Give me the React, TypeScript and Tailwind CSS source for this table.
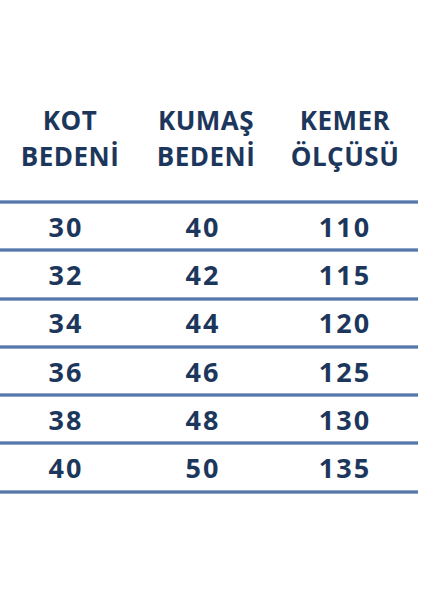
const ROWS: [string, string, string][] = [
  ['30', '40', '110'],
  ['32', '42', '115'],
  ['34', '44', '120'],
  ['36', '46', '125'],
  ['38', '48', '130'],
  ['40', '50', '135'],
]

function Rule() {
  return <div className="h-[4px] w-[418px] bg-[#5577aa] border-y border-[#8ea6c8]" />
}

export default function App() {
  return (
    <div className="h-[600px] w-[424px] bg-white pt-[102px] font-['Open_Sans',sans-serif] font-bold text-[#1d375c]">
      <div className="grid grid-cols-[140px_132px_146px] w-[418px] text-[26px] leading-[36px] text-center tracking-[0.5px]">
        <div>KOT<br />BEDENİ</div>
        <div>KUMAŞ<br />BEDENİ</div>
        <div>KEMER<br />ÖLÇÜSÜ</div>
      </div>
      <div className="mt-[26px]">
        <Rule />
        {ROWS.map(r => (
          <div key={r[0]}>
            <div className="grid grid-cols-[140px_132px_146px] w-[418px] h-[44.3px] items-center text-center text-[27px] leading-none tracking-[2px]">
              <span className="pr-[8px]">{r[0]}</span>
              <span className="pr-[6px]">{r[1]}</span>
              <span>{r[2]}</span>
            </div>
            <Rule />
          </div>
        ))}
      </div>
    </div>
  )
}
